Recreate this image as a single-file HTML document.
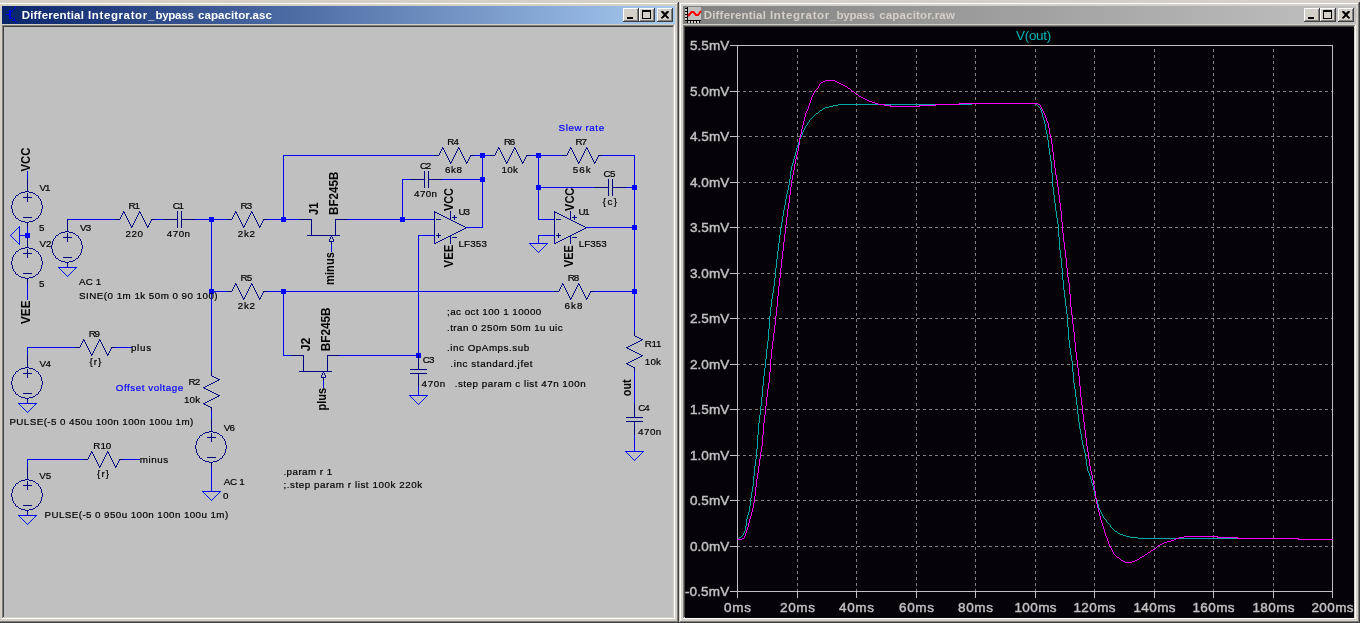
<!DOCTYPE html><html><head><meta charset="utf-8"><style>html,body{margin:0;padding:0;overflow:hidden;background:#d4d0c8}svg{display:block;will-change:transform}text{font-family:"Liberation Sans",sans-serif}</style></head><body>
<svg width="1360" height="623" viewBox="0 0 1360 623">
<defs><linearGradient id="ga" x1="0" x2="1" y1="0" y2="0"><stop offset="0" stop-color="#0a246a"/><stop offset="1" stop-color="#a6caf0"/></linearGradient><linearGradient id="gi" x1="0" x2="1" y1="0" y2="0"><stop offset="0" stop-color="#808080"/><stop offset="1" stop-color="#c0c0c0"/></linearGradient></defs>
<rect x="0" y="0" width="1360" height="623" fill="#d4d0c8"/>
<rect x="-2" y="2" width="681" height="621" fill="#d4d0c8"/>
<rect x="-2" y="2" width="681" height="1" fill="#d4d0c8"/>
<rect x="-1" y="3" width="679" height="1" fill="#ffffff"/>
<rect x="-1" y="3" width="1" height="619" fill="#ffffff"/>
<rect x="678" y="2" width="1" height="621" fill="#404040"/>
<rect x="677" y="3" width="1" height="619" fill="#808080"/>
<rect x="-2" y="622" width="681" height="1" fill="#404040"/>
<rect x="-1" y="621" width="679" height="1" fill="#808080"/>
<rect x="2" y="6" width="673" height="18" fill="url(#ga)"/>
<rect x="2" y="25" width="673" height="1" fill="#808080"/>
<rect x="2" y="25" width="1" height="594" fill="#808080"/>
<rect x="3" y="26" width="671" height="1" fill="#404040"/>
<rect x="3" y="26" width="1" height="592" fill="#404040"/>
<rect x="674" y="25" width="1" height="594" fill="#ffffff"/>
<rect x="2" y="618" width="673" height="1" fill="#ffffff"/>
<rect x="673" y="26" width="1" height="592" fill="#d4d0c8"/>
<rect x="3" y="617" width="671" height="1" fill="#d4d0c8"/>
<rect x="657" y="8" width="16" height="14" fill="#404040"/>
<rect x="657" y="8" width="15" height="13" fill="#ffffff"/>
<rect x="658" y="9" width="14" height="12" fill="#808080"/>
<rect x="658" y="9" width="13" height="11" fill="#d4d0c8"/>
<rect x="661" y="11" width="1" height="1" fill="#000000"/>
<rect x="662" y="11" width="1" height="1" fill="#000000"/>
<rect x="667" y="11" width="1" height="1" fill="#000000"/>
<rect x="668" y="11" width="1" height="1" fill="#000000"/>
<rect x="662" y="12" width="1" height="1" fill="#000000"/>
<rect x="663" y="12" width="1" height="1" fill="#000000"/>
<rect x="666" y="12" width="1" height="1" fill="#000000"/>
<rect x="667" y="12" width="1" height="1" fill="#000000"/>
<rect x="663" y="13" width="1" height="1" fill="#000000"/>
<rect x="664" y="13" width="1" height="1" fill="#000000"/>
<rect x="665" y="13" width="1" height="1" fill="#000000"/>
<rect x="666" y="13" width="1" height="1" fill="#000000"/>
<rect x="664" y="14" width="1" height="1" fill="#000000"/>
<rect x="665" y="14" width="1" height="1" fill="#000000"/>
<rect x="663" y="15" width="1" height="1" fill="#000000"/>
<rect x="664" y="15" width="1" height="1" fill="#000000"/>
<rect x="665" y="15" width="1" height="1" fill="#000000"/>
<rect x="666" y="15" width="1" height="1" fill="#000000"/>
<rect x="662" y="16" width="1" height="1" fill="#000000"/>
<rect x="663" y="16" width="1" height="1" fill="#000000"/>
<rect x="666" y="16" width="1" height="1" fill="#000000"/>
<rect x="667" y="16" width="1" height="1" fill="#000000"/>
<rect x="661" y="17" width="1" height="1" fill="#000000"/>
<rect x="662" y="17" width="1" height="1" fill="#000000"/>
<rect x="667" y="17" width="1" height="1" fill="#000000"/>
<rect x="668" y="17" width="1" height="1" fill="#000000"/>
<rect x="657" y="8" width="16" height="14" fill="#404040"/>
<rect x="657" y="8" width="15" height="13" fill="#ffffff"/>
<rect x="658" y="9" width="14" height="12" fill="#808080"/>
<rect x="658" y="9" width="13" height="11" fill="#d4d0c8"/>
<path d="M661,11 l2,0 l2,2 l2,-2 l2,0 l-3,3.5 l3,3.5 l-2,0 l-2,-2 l-2,2 l-2,0 l3,-3.5 z" fill="#000"/>
<path d="M661.5,11.5 L668.5,18.5 M668.5,11.5 L661.5,18.5" stroke="#000" stroke-width="1.6"/>
<rect x="639" y="8" width="16" height="14" fill="#404040"/>
<rect x="639" y="8" width="15" height="13" fill="#ffffff"/>
<rect x="640" y="9" width="14" height="12" fill="#808080"/>
<rect x="640" y="9" width="13" height="11" fill="#d4d0c8"/>
<rect x="639" y="8" width="16" height="14" fill="#404040"/>
<rect x="639" y="8" width="15" height="13" fill="#ffffff"/>
<rect x="640" y="9" width="14" height="12" fill="#808080"/>
<rect x="640" y="9" width="13" height="11" fill="#d4d0c8"/>
<rect x="642" y="10" width="9" height="9" fill="#000000"/>
<rect x="643" y="12" width="7" height="6" fill="#d4d0c8"/>
<rect x="623" y="8" width="16" height="14" fill="#404040"/>
<rect x="623" y="8" width="15" height="13" fill="#ffffff"/>
<rect x="624" y="9" width="14" height="12" fill="#808080"/>
<rect x="624" y="9" width="13" height="11" fill="#d4d0c8"/>
<rect x="623" y="8" width="16" height="14" fill="#404040"/>
<rect x="623" y="8" width="15" height="13" fill="#ffffff"/>
<rect x="624" y="9" width="14" height="12" fill="#808080"/>
<rect x="624" y="9" width="13" height="11" fill="#d4d0c8"/>
<rect x="627" y="17" width="6" height="2" fill="#000000"/>
<rect x="679" y="2" width="681" height="621" fill="#d4d0c8"/>
<rect x="679" y="2" width="681" height="1" fill="#d4d0c8"/>
<rect x="680" y="3" width="679" height="1" fill="#ffffff"/>
<rect x="680" y="3" width="1" height="619" fill="#ffffff"/>
<rect x="1359" y="2" width="1" height="621" fill="#404040"/>
<rect x="1358" y="3" width="1" height="619" fill="#808080"/>
<rect x="679" y="622" width="681" height="1" fill="#404040"/>
<rect x="680" y="621" width="679" height="1" fill="#808080"/>
<rect x="683" y="6" width="673" height="18" fill="url(#gi)"/>
<rect x="683" y="25" width="673" height="1" fill="#808080"/>
<rect x="683" y="25" width="1" height="594" fill="#808080"/>
<rect x="684" y="26" width="671" height="1" fill="#404040"/>
<rect x="684" y="26" width="1" height="592" fill="#404040"/>
<rect x="1355" y="25" width="1" height="594" fill="#ffffff"/>
<rect x="683" y="618" width="673" height="1" fill="#ffffff"/>
<rect x="1354" y="26" width="1" height="592" fill="#d4d0c8"/>
<rect x="684" y="617" width="671" height="1" fill="#d4d0c8"/>
<rect x="1338" y="8" width="16" height="14" fill="#404040"/>
<rect x="1338" y="8" width="15" height="13" fill="#ffffff"/>
<rect x="1339" y="9" width="14" height="12" fill="#808080"/>
<rect x="1339" y="9" width="13" height="11" fill="#d4d0c8"/>
<rect x="1342" y="11" width="1" height="1" fill="#000000"/>
<rect x="1343" y="11" width="1" height="1" fill="#000000"/>
<rect x="1348" y="11" width="1" height="1" fill="#000000"/>
<rect x="1349" y="11" width="1" height="1" fill="#000000"/>
<rect x="1343" y="12" width="1" height="1" fill="#000000"/>
<rect x="1344" y="12" width="1" height="1" fill="#000000"/>
<rect x="1347" y="12" width="1" height="1" fill="#000000"/>
<rect x="1348" y="12" width="1" height="1" fill="#000000"/>
<rect x="1344" y="13" width="1" height="1" fill="#000000"/>
<rect x="1345" y="13" width="1" height="1" fill="#000000"/>
<rect x="1346" y="13" width="1" height="1" fill="#000000"/>
<rect x="1347" y="13" width="1" height="1" fill="#000000"/>
<rect x="1345" y="14" width="1" height="1" fill="#000000"/>
<rect x="1346" y="14" width="1" height="1" fill="#000000"/>
<rect x="1344" y="15" width="1" height="1" fill="#000000"/>
<rect x="1345" y="15" width="1" height="1" fill="#000000"/>
<rect x="1346" y="15" width="1" height="1" fill="#000000"/>
<rect x="1347" y="15" width="1" height="1" fill="#000000"/>
<rect x="1343" y="16" width="1" height="1" fill="#000000"/>
<rect x="1344" y="16" width="1" height="1" fill="#000000"/>
<rect x="1347" y="16" width="1" height="1" fill="#000000"/>
<rect x="1348" y="16" width="1" height="1" fill="#000000"/>
<rect x="1342" y="17" width="1" height="1" fill="#000000"/>
<rect x="1343" y="17" width="1" height="1" fill="#000000"/>
<rect x="1348" y="17" width="1" height="1" fill="#000000"/>
<rect x="1349" y="17" width="1" height="1" fill="#000000"/>
<rect x="1338" y="8" width="16" height="14" fill="#404040"/>
<rect x="1338" y="8" width="15" height="13" fill="#ffffff"/>
<rect x="1339" y="9" width="14" height="12" fill="#808080"/>
<rect x="1339" y="9" width="13" height="11" fill="#d4d0c8"/>
<path d="M1342,11 l2,0 l2,2 l2,-2 l2,0 l-3,3.5 l3,3.5 l-2,0 l-2,-2 l-2,2 l-2,0 l3,-3.5 z" fill="#000"/>
<path d="M1342.5,11.5 L1349.5,18.5 M1349.5,11.5 L1342.5,18.5" stroke="#000" stroke-width="1.6"/>
<rect x="1320" y="8" width="16" height="14" fill="#404040"/>
<rect x="1320" y="8" width="15" height="13" fill="#ffffff"/>
<rect x="1321" y="9" width="14" height="12" fill="#808080"/>
<rect x="1321" y="9" width="13" height="11" fill="#d4d0c8"/>
<rect x="1320" y="8" width="16" height="14" fill="#404040"/>
<rect x="1320" y="8" width="15" height="13" fill="#ffffff"/>
<rect x="1321" y="9" width="14" height="12" fill="#808080"/>
<rect x="1321" y="9" width="13" height="11" fill="#d4d0c8"/>
<rect x="1323" y="10" width="9" height="9" fill="#000000"/>
<rect x="1324" y="12" width="7" height="6" fill="#d4d0c8"/>
<rect x="1304" y="8" width="16" height="14" fill="#404040"/>
<rect x="1304" y="8" width="15" height="13" fill="#ffffff"/>
<rect x="1305" y="9" width="14" height="12" fill="#808080"/>
<rect x="1305" y="9" width="13" height="11" fill="#d4d0c8"/>
<rect x="1304" y="8" width="16" height="14" fill="#404040"/>
<rect x="1304" y="8" width="15" height="13" fill="#ffffff"/>
<rect x="1305" y="9" width="14" height="12" fill="#808080"/>
<rect x="1305" y="9" width="13" height="11" fill="#d4d0c8"/>
<rect x="1308" y="17" width="6" height="2" fill="#000000"/>
<text x="21.7" y="19" font-size="11.5" font-weight="bold" fill="#ffffff" textLength="62.2" lengthAdjust="spacing">Differential</text>
<text x="88" y="19" font-size="11.5" font-weight="bold" fill="#ffffff" textLength="59.2" lengthAdjust="spacing">Integrator</text>
<text x="148.1" y="19" font-size="11.5" font-weight="bold" fill="#ffffff" textLength="6.6" lengthAdjust="spacing">_</text>
<text x="155.4" y="19" font-size="11.5" font-weight="bold" fill="#ffffff" textLength="38.4" lengthAdjust="spacing">bypass</text>
<text x="197.9" y="19" font-size="11.5" font-weight="bold" fill="#ffffff" textLength="74.1" lengthAdjust="spacing">capacitor.asc</text>
<text x="703.7" y="19" font-size="11.5" font-weight="bold" fill="#d4d0c8" textLength="62.2" lengthAdjust="spacing">Differential</text>
<text x="770" y="19" font-size="11.5" font-weight="bold" fill="#d4d0c8" textLength="59.2" lengthAdjust="spacing">Integrator</text>
<text x="830.1" y="19" font-size="11.5" font-weight="bold" fill="#d4d0c8" textLength="6.6" lengthAdjust="spacing">_</text>
<text x="836.5" y="19" font-size="11.5" font-weight="bold" fill="#d4d0c8" textLength="38.4" lengthAdjust="spacing">bypass</text>
<text x="879.2" y="19" font-size="11.5" font-weight="bold" fill="#d4d0c8" textLength="75.7" lengthAdjust="spacing">capacitor.raw</text>
<g fill="#0000ff" shape-rendering="crispEdges"><rect x="6" y="14" width="3" height="1"/><rect x="9" y="10" width="2" height="9"/><rect x="11" y="11" width="1" height="1"/><rect x="12" y="10" width="1" height="1"/><rect x="13" y="9" width="1" height="1"/><rect x="14" y="8" width="1" height="1"/><rect x="15" y="7" width="1" height="1"/><rect x="11" y="17" width="1" height="1"/><rect x="12" y="18" width="1" height="1"/><rect x="13" y="19" width="1" height="1"/><rect x="14" y="20" width="1" height="1"/><rect x="15" y="21" width="1" height="1"/><rect x="16" y="22" width="1" height="1"/><rect x="12" y="20" width="1" height="1"/><rect x="13" y="20" width="1" height="1"/><rect x="14" y="18" width="1" height="1"/><rect x="14" y="19" width="1" height="1"/></g>
<g shape-rendering="crispEdges">
<rect x="688" y="7" width="13" height="13" fill="#c0c0c0"/>
<rect x="685" y="9" width="2" height="2" fill="#d4d0c8"/>
<rect x="685" y="12" width="2" height="2" fill="#d4d0c8"/>
<rect x="685" y="15" width="2" height="2" fill="#d4d0c8"/>
<rect x="685" y="18" width="2" height="2" fill="#d4d0c8"/>
<rect x="688" y="21" width="2" height="2" fill="#d4d0c8"/>
<rect x="691" y="21" width="2" height="2" fill="#d4d0c8"/>
<rect x="694" y="21" width="2" height="2" fill="#d4d0c8"/>
<rect x="697" y="21" width="2" height="2" fill="#d4d0c8"/>
<rect x="687" y="7" width="1" height="16" fill="#000000"/>
<rect x="685" y="8" width="2" height="1" fill="#000000"/>
<rect x="685" y="11" width="2" height="1" fill="#000000"/>
<rect x="685" y="14" width="2" height="1" fill="#000000"/>
<rect x="685" y="17" width="2" height="1" fill="#000000"/>
<rect x="685" y="20" width="2" height="1" fill="#000000"/>
<rect x="685" y="20" width="16" height="1" fill="#000000"/>
<rect x="687" y="21" width="1" height="2" fill="#000000"/>
<rect x="690" y="21" width="1" height="2" fill="#000000"/>
<rect x="693" y="21" width="1" height="2" fill="#000000"/>
<rect x="696" y="21" width="1" height="2" fill="#000000"/>
<rect x="699" y="21" width="1" height="2" fill="#000000"/>
</g>
<polyline points="688,16 691.5,12 693.5,12 696,15 698,15 701,11" fill="none" stroke="#ff0000" stroke-width="2"/>
<rect x="4" y="27" width="669" height="590" fill="#c0c0c0"/>
<g shape-rendering="crispEdges">
<path fill="#0000ff" d="M480 153h5v1h-5zM536 153h5v1h-5zM480 154h5v1h-5zM536 154h5v1h-5zM283 155h151v1h-151zM474 155h16v1h-16zM530 155h32v1h-32zM602 155h33v1h-33zM283 156h1v61h-1zM480 156h5v1h-5zM536 156h5v1h-5zM634 156h1v29h-1zM480 157h5v1h-5zM536 157h5v1h-5zM482 158h1v19h-1zM538 158h1v27h-1zM27 171h1v8h-1zM480 177h5v1h-5zM480 178h5v1h-5zM402 179h8v1h-8zM442 179h43v1h-43zM402 180h1v37h-1zM480 180h5v1h-5zM480 181h5v1h-5zM482 182h1v45h-1zM536 185h5v1h-5zM632 185h5v1h-5zM536 186h5v1h-5zM632 186h5v1h-5zM536 187h58v1h-58zM626 187h11v1h-11zM536 188h5v1h-5zM632 188h5v1h-5zM536 189h5v1h-5zM632 189h5v1h-5zM538 190h1v29h-1zM634 190h1v35h-1zM209 217h5v1h-5zM281 217h5v1h-5zM400 217h5v1h-5zM209 218h5v1h-5zM281 218h5v1h-5zM400 218h5v1h-5zM68 219h47v1h-47zM155 219h8v1h-8zM195 219h32v1h-32zM267 219h32v1h-32zM347 219h87v1h-87zM538 219h16v1h-16zM209 220h5v1h-5zM281 220h5v1h-5zM400 220h5v1h-5zM209 221h5v1h-5zM281 221h5v1h-5zM400 221h5v1h-5zM211 222h1v67h-1zM632 225h5v1h-5zM19 226h1v1h-1zM632 226h5v1h-5zM18 227h2v1h-2zM27 227h1v6h-1zM466 227h17v1h-17zM586 227h51v1h-51zM17 228h1v1h-1zM19 228h1v7h-1zM632 228h5v1h-5zM16 229h1v1h-1zM632 229h5v1h-5zM15 230h1v1h-1zM634 230h1v59h-1zM14 231h1v1h-1zM13 232h1v1h-1zM12 233h1v1h-1zM25 233h5v1h-5zM11 234h1v1h-1zM25 234h5v1h-5zM10 235h1v1h-1zM19 235h11v1h-11zM418 235h17v1h-17zM538 235h17v1h-17zM11 236h1v1h-1zM19 236h1v7h-1zM25 236h5v1h-5zM418 236h1v55h-1zM538 236h1v7h-1zM12 237h1v1h-1zM25 237h5v1h-5zM13 238h1v1h-1zM14 239h1v1h-1zM15 240h1v1h-1zM16 241h1v1h-1zM17 242h1v1h-1zM18 243h2v1h-2zM529 243h19v1h-19zM19 244h1v1h-1zM530 244h1v1h-1zM546 244h1v1h-1zM331 245h1v7h-1zM531 245h1v1h-1zM545 245h1v1h-1zM532 246h1v1h-1zM544 246h1v1h-1zM533 247h1v1h-1zM543 247h1v1h-1zM534 248h1v1h-1zM542 248h1v1h-1zM535 249h1v1h-1zM541 249h1v1h-1zM536 250h1v1h-1zM540 250h1v1h-1zM537 251h1v1h-1zM539 251h1v1h-1zM538 252h1v1h-1zM58 267h19v1h-19zM59 268h1v1h-1zM75 268h1v1h-1zM60 269h1v1h-1zM74 269h1v1h-1zM61 270h1v1h-1zM73 270h1v1h-1zM62 271h1v1h-1zM72 271h1v1h-1zM63 272h1v1h-1zM71 272h1v1h-1zM64 273h1v1h-1zM70 273h1v1h-1zM65 274h1v1h-1zM69 274h1v1h-1zM66 275h1v1h-1zM68 275h1v1h-1zM67 276h1v1h-1zM27 283h1v17h-1zM209 289h5v1h-5zM281 289h5v1h-5zM632 289h5v1h-5zM209 290h5v1h-5zM281 290h5v1h-5zM632 290h5v1h-5zM209 291h18v1h-18zM267 291h287v1h-287zM594 291h43v1h-43zM209 292h5v1h-5zM281 292h5v1h-5zM418 292h1v61h-1zM632 292h5v1h-5zM209 293h5v1h-5zM281 293h5v1h-5zM632 293h5v1h-5zM211 294h1v77h-1zM283 294h1v61h-1zM634 294h1v37h-1zM27 347h48v1h-48zM115 347h17v1h-17zM27 348h1v7h-1zM416 353h5v1h-5zM416 354h5v1h-5zM283 355h8v1h-8zM339 355h79v1h-79zM419 355h2v1h-2zM416 356h2v1h-2zM419 356h2v1h-2zM416 357h2v1h-2zM419 357h2v1h-2zM634 371h1v32h-1zM323 381h1v7h-1zM418 387h1v8h-1zM409 395h19v1h-19zM410 396h1v1h-1zM426 396h1v1h-1zM411 397h1v1h-1zM425 397h1v1h-1zM412 398h1v1h-1zM424 398h1v1h-1zM413 399h1v1h-1zM423 399h1v1h-1zM414 400h1v1h-1zM422 400h1v1h-1zM415 401h1v1h-1zM421 401h1v1h-1zM416 402h1v1h-1zM420 402h1v1h-1zM18 403h19v1h-19zM417 403h1v1h-1zM419 403h1v1h-1zM19 404h1v1h-1zM35 404h1v1h-1zM418 404h1v1h-1zM20 405h1v1h-1zM34 405h1v1h-1zM21 406h1v1h-1zM33 406h1v1h-1zM22 407h1v1h-1zM32 407h1v1h-1zM23 408h1v1h-1zM31 408h1v1h-1zM24 409h1v1h-1zM30 409h1v1h-1zM25 410h1v1h-1zM29 410h1v1h-1zM26 411h1v1h-1zM28 411h1v1h-1zM211 411h1v8h-1zM27 412h1v1h-1zM634 435h1v16h-1zM625 451h19v1h-19zM626 452h1v1h-1zM642 452h1v1h-1zM627 453h1v1h-1zM641 453h1v1h-1zM628 454h1v1h-1zM640 454h1v1h-1zM629 455h1v1h-1zM639 455h1v1h-1zM630 456h1v1h-1zM638 456h1v1h-1zM631 457h1v1h-1zM637 457h1v1h-1zM632 458h1v1h-1zM636 458h1v1h-1zM27 459h56v1h-56zM123 459h17v1h-17zM633 459h1v1h-1zM635 459h1v1h-1zM27 460h1v7h-1zM634 460h1v1h-1zM211 467h1v24h-1zM202 491h19v1h-19zM203 492h1v1h-1zM219 492h1v1h-1zM204 493h1v1h-1zM218 493h1v1h-1zM205 494h1v1h-1zM217 494h1v1h-1zM206 495h1v1h-1zM216 495h1v1h-1zM207 496h1v1h-1zM215 496h1v1h-1zM208 497h1v1h-1zM214 497h1v1h-1zM209 498h1v1h-1zM213 498h1v1h-1zM210 499h1v1h-1zM212 499h1v1h-1zM211 500h1v1h-1zM18 515h19v1h-19zM19 516h1v1h-1zM35 516h1v1h-1zM20 517h1v1h-1zM34 517h1v1h-1zM21 518h1v1h-1zM33 518h1v1h-1zM22 519h1v1h-1zM32 519h1v1h-1zM23 520h1v1h-1zM31 520h1v1h-1zM24 521h1v1h-1zM30 521h1v1h-1zM25 522h1v1h-1zM29 522h1v1h-1zM26 523h1v1h-1zM28 523h1v1h-1zM27 524h1v1h-1z"/>
<path fill="#000080" d="M442 147h1v1h-1zM458 147h1v1h-1zM498 147h1v1h-1zM514 147h1v1h-1zM570 147h1v1h-1zM586 147h1v1h-1zM442 148h2v1h-2zM458 148h2v1h-2zM498 148h2v1h-2zM514 148h2v1h-2zM570 148h2v1h-2zM586 148h2v1h-2zM441 149h1v2h-1zM443 149h1v1h-1zM457 149h1v2h-1zM459 149h1v1h-1zM497 149h1v2h-1zM499 149h1v1h-1zM513 149h1v2h-1zM515 149h1v1h-1zM569 149h1v2h-1zM571 149h1v1h-1zM585 149h1v2h-1zM587 149h1v1h-1zM444 150h1v2h-1zM460 150h1v2h-1zM500 150h1v2h-1zM516 150h1v2h-1zM572 150h1v2h-1zM588 150h1v2h-1zM440 151h1v2h-1zM456 151h1v2h-1zM496 151h1v2h-1zM512 151h1v2h-1zM568 151h1v2h-1zM584 151h1v2h-1zM445 152h1v2h-1zM461 152h1v2h-1zM501 152h1v2h-1zM517 152h1v2h-1zM573 152h1v2h-1zM589 152h1v2h-1zM439 153h1v2h-1zM455 153h1v2h-1zM495 153h1v2h-1zM511 153h1v2h-1zM567 153h1v2h-1zM583 153h1v2h-1zM446 154h1v2h-1zM462 154h1v2h-1zM502 154h1v2h-1zM518 154h1v2h-1zM574 154h1v2h-1zM590 154h1v2h-1zM434 155h5v1h-5zM454 155h1v2h-1zM470 155h4v1h-4zM490 155h5v1h-5zM510 155h1v2h-1zM526 155h4v1h-4zM562 155h5v1h-5zM582 155h1v2h-1zM598 155h4v1h-4zM447 156h1v2h-1zM463 156h1v2h-1zM470 156h1v1h-1zM503 156h1v2h-1zM519 156h1v2h-1zM526 156h1v1h-1zM575 156h1v2h-1zM591 156h1v2h-1zM598 156h1v1h-1zM453 157h1v2h-1zM469 157h1v2h-1zM509 157h1v2h-1zM525 157h1v2h-1zM581 157h1v2h-1zM597 157h1v2h-1zM448 158h1v2h-1zM464 158h1v2h-1zM504 158h1v2h-1zM520 158h1v2h-1zM576 158h1v2h-1zM592 158h1v2h-1zM452 159h1v2h-1zM468 159h1v2h-1zM508 159h1v2h-1zM524 159h1v2h-1zM580 159h1v2h-1zM596 159h1v2h-1zM449 160h1v2h-1zM465 160h1v2h-1zM505 160h1v2h-1zM521 160h1v2h-1zM577 160h1v2h-1zM593 160h1v2h-1zM451 161h1v1h-1zM467 161h1v1h-1zM507 161h1v1h-1zM523 161h1v1h-1zM579 161h1v1h-1zM595 161h1v1h-1zM450 162h2v1h-2zM466 162h2v1h-2zM506 162h2v1h-2zM522 162h2v1h-2zM578 162h2v1h-2zM594 162h2v1h-2zM450 163h1v1h-1zM466 163h1v1h-1zM506 163h1v1h-1zM522 163h1v1h-1zM578 163h1v1h-1zM594 163h1v1h-1zM424 171h1v8h-1zM428 171h1v8h-1zM27 179h1v12h-1zM410 179h15v1h-15zM428 179h14v1h-14zM608 179h1v8h-1zM612 179h1v8h-1zM424 180h1v8h-1zM428 180h1v8h-1zM594 187h15v1h-15zM612 187h14v1h-14zM608 188h1v8h-1zM612 188h1v8h-1zM25 191h4v1h-4zM21 192h4v1h-4zM29 192h4v1h-4zM19 193h2v1h-2zM27 193h1v4h-1zM33 193h2v1h-2zM18 194h1v1h-1zM35 194h1v1h-1zM16 195h2v1h-2zM36 195h2v1h-2zM15 196h1v2h-1zM38 196h1v2h-1zM23 197h9v1h-9zM14 198h1v1h-1zM27 198h1v4h-1zM39 198h1v1h-1zM13 199h1v2h-1zM40 199h1v2h-1zM12 201h1v4h-1zM41 201h1v4h-1zM11 205h1v4h-1zM42 205h1v4h-1zM12 209h1v4h-1zM41 209h1v4h-1zM123 211h1v1h-1zM139 211h1v1h-1zM177 211h1v8h-1zM181 211h1v8h-1zM235 211h1v1h-1zM251 211h1v1h-1zM434 211h1v1h-1zM450 211h1v8h-1zM554 211h1v1h-1zM570 211h1v8h-1zM123 212h2v1h-2zM139 212h2v1h-2zM235 212h2v1h-2zM251 212h2v1h-2zM434 212h3v1h-3zM554 212h3v1h-3zM13 213h1v2h-1zM40 213h1v2h-1zM122 213h1v2h-1zM124 213h1v1h-1zM138 213h1v2h-1zM140 213h1v1h-1zM234 213h1v2h-1zM236 213h1v1h-1zM250 213h1v2h-1zM252 213h1v1h-1zM434 213h1v22h-1zM437 213h2v1h-2zM554 213h1v22h-1zM557 213h2v1h-2zM125 214h1v2h-1zM141 214h1v2h-1zM237 214h1v2h-1zM253 214h1v2h-1zM439 214h2v1h-2zM559 214h2v1h-2zM14 215h1v1h-1zM39 215h1v1h-1zM121 215h1v2h-1zM137 215h1v2h-1zM233 215h1v2h-1zM249 215h1v2h-1zM441 215h2v1h-2zM454 215h1v2h-1zM561 215h2v1h-2zM574 215h1v2h-1zM15 216h1v2h-1zM38 216h1v2h-1zM126 216h1v2h-1zM142 216h1v2h-1zM238 216h1v2h-1zM254 216h1v2h-1zM443 216h2v1h-2zM563 216h2v1h-2zM23 217h9v1h-9zM120 217h1v2h-1zM136 217h1v2h-1zM232 217h1v2h-1zM248 217h1v2h-1zM445 217h2v1h-2zM452 217h5v1h-5zM565 217h2v1h-2zM572 217h5v1h-5zM16 218h2v1h-2zM36 218h2v1h-2zM127 218h1v2h-1zM143 218h1v2h-1zM239 218h1v2h-1zM255 218h1v2h-1zM447 218h2v1h-2zM454 218h1v2h-1zM567 218h2v1h-2zM574 218h1v2h-1zM18 219h1v1h-1zM35 219h1v1h-1zM67 219h1v12h-1zM115 219h5v1h-5zM135 219h1v2h-1zM151 219h4v1h-4zM163 219h15v1h-15zM181 219h14v1h-14zM227 219h5v1h-5zM247 219h1v2h-1zM263 219h4v1h-4zM299 219h13v1h-13zM335 219h12v1h-12zM436 219h5v1h-5zM449 219h2v1h-2zM556 219h5v1h-5zM569 219h2v1h-2zM19 220h2v1h-2zM33 220h2v1h-2zM128 220h1v2h-1zM144 220h1v2h-1zM151 220h1v1h-1zM177 220h1v8h-1zM181 220h1v8h-1zM240 220h1v2h-1zM256 220h1v2h-1zM263 220h1v1h-1zM311 220h1v15h-1zM335 220h1v15h-1zM451 220h2v1h-2zM571 220h2v1h-2zM21 221h4v1h-4zM29 221h4v1h-4zM134 221h1v2h-1zM150 221h1v2h-1zM246 221h1v2h-1zM262 221h1v2h-1zM453 221h2v1h-2zM573 221h2v1h-2zM25 222h4v1h-4zM129 222h1v2h-1zM145 222h1v2h-1zM241 222h1v2h-1zM257 222h1v2h-1zM455 222h2v1h-2zM575 222h2v1h-2zM27 223h1v4h-1zM133 223h1v2h-1zM149 223h1v2h-1zM245 223h1v2h-1zM261 223h1v2h-1zM457 223h2v1h-2zM577 223h2v1h-2zM130 224h1v2h-1zM146 224h1v2h-1zM242 224h1v2h-1zM258 224h1v2h-1zM459 224h2v1h-2zM579 224h2v1h-2zM132 225h1v1h-1zM148 225h1v1h-1zM244 225h1v1h-1zM260 225h1v1h-1zM461 225h2v1h-2zM581 225h2v1h-2zM131 226h2v1h-2zM147 226h2v1h-2zM243 226h2v1h-2zM259 226h2v1h-2zM463 226h2v1h-2zM583 226h2v1h-2zM131 227h1v1h-1zM147 227h1v1h-1zM243 227h1v1h-1zM259 227h1v1h-1zM465 227h1v1h-1zM585 227h1v1h-1zM464 228h2v1h-2zM584 228h2v1h-2zM462 229h2v1h-2zM582 229h2v1h-2zM460 230h2v1h-2zM580 230h2v1h-2zM65 231h4v1h-4zM458 231h2v1h-2zM578 231h2v1h-2zM61 232h4v1h-4zM69 232h4v1h-4zM456 232h2v1h-2zM576 232h2v1h-2zM59 233h2v1h-2zM67 233h1v4h-1zM73 233h2v1h-2zM438 233h1v2h-1zM454 233h2v1h-2zM558 233h1v2h-1zM574 233h2v1h-2zM58 234h1v1h-1zM75 234h1v1h-1zM452 234h2v1h-2zM572 234h2v1h-2zM56 235h2v1h-2zM76 235h2v1h-2zM307 235h33v1h-33zM436 235h5v1h-5zM450 235h2v1h-2zM556 235h5v1h-5zM570 235h2v1h-2zM55 236h1v2h-1zM78 236h1v2h-1zM331 236h1v1h-1zM434 236h1v7h-1zM438 236h1v2h-1zM448 236h3v1h-3zM554 236h1v7h-1zM558 236h1v2h-1zM568 236h3v1h-3zM63 237h9v1h-9zM330 237h1v2h-1zM332 237h1v2h-1zM446 237h2v1h-2zM450 237h1v7h-1zM452 237h5v1h-5zM566 237h2v1h-2zM570 237h1v7h-1zM572 237h5v1h-5zM27 238h1v9h-1zM54 238h1v1h-1zM67 238h1v4h-1zM79 238h1v1h-1zM444 238h2v1h-2zM564 238h2v1h-2zM53 239h1v2h-1zM80 239h1v2h-1zM329 239h1v2h-1zM333 239h1v2h-1zM442 239h2v1h-2zM562 239h2v1h-2zM440 240h2v1h-2zM560 240h2v1h-2zM52 241h1v4h-1zM81 241h1v4h-1zM329 241h5v1h-5zM438 241h2v1h-2zM558 241h2v1h-2zM331 242h1v3h-1zM436 242h2v1h-2zM556 242h2v1h-2zM434 243h2v1h-2zM554 243h2v1h-2zM51 245h1v4h-1zM82 245h1v4h-1zM25 247h4v1h-4zM21 248h4v1h-4zM29 248h4v1h-4zM19 249h2v1h-2zM27 249h1v4h-1zM33 249h2v1h-2zM52 249h1v4h-1zM81 249h1v4h-1zM18 250h1v1h-1zM35 250h1v1h-1zM16 251h2v1h-2zM36 251h2v1h-2zM15 252h1v2h-1zM38 252h1v2h-1zM23 253h9v1h-9zM53 253h1v2h-1zM80 253h1v2h-1zM14 254h1v1h-1zM27 254h1v4h-1zM39 254h1v1h-1zM13 255h1v2h-1zM40 255h1v2h-1zM54 255h1v1h-1zM79 255h1v1h-1zM55 256h1v2h-1zM78 256h1v2h-1zM12 257h1v4h-1zM41 257h1v4h-1zM63 257h9v1h-9zM56 258h2v1h-2zM76 258h2v1h-2zM58 259h1v1h-1zM75 259h1v1h-1zM59 260h2v1h-2zM73 260h2v1h-2zM11 261h1v4h-1zM42 261h1v4h-1zM61 261h4v1h-4zM69 261h4v1h-4zM65 262h4v1h-4zM67 263h1v4h-1zM12 265h1v4h-1zM41 265h1v4h-1zM13 269h1v2h-1zM40 269h1v2h-1zM14 271h1v1h-1zM39 271h1v1h-1zM15 272h1v2h-1zM38 272h1v2h-1zM23 273h9v1h-9zM16 274h2v1h-2zM36 274h2v1h-2zM18 275h1v1h-1zM35 275h1v1h-1zM19 276h2v1h-2zM33 276h2v1h-2zM21 277h4v1h-4zM29 277h4v1h-4zM25 278h4v1h-4zM27 279h1v4h-1zM235 283h1v1h-1zM251 283h1v1h-1zM562 283h1v1h-1zM578 283h1v1h-1zM235 284h2v1h-2zM251 284h2v1h-2zM562 284h2v1h-2zM578 284h2v1h-2zM234 285h1v2h-1zM236 285h1v1h-1zM250 285h1v2h-1zM252 285h1v1h-1zM561 285h1v2h-1zM563 285h1v1h-1zM577 285h1v2h-1zM579 285h1v1h-1zM237 286h1v2h-1zM253 286h1v2h-1zM564 286h1v2h-1zM580 286h1v2h-1zM233 287h1v2h-1zM249 287h1v2h-1zM560 287h1v2h-1zM576 287h1v2h-1zM238 288h1v2h-1zM254 288h1v2h-1zM565 288h1v2h-1zM581 288h1v2h-1zM232 289h1v2h-1zM248 289h1v2h-1zM559 289h1v2h-1zM575 289h1v2h-1zM239 290h1v2h-1zM255 290h1v2h-1zM566 290h1v2h-1zM582 290h1v2h-1zM227 291h5v1h-5zM247 291h1v2h-1zM263 291h4v1h-4zM554 291h5v1h-5zM574 291h1v2h-1zM590 291h4v1h-4zM240 292h1v2h-1zM256 292h1v2h-1zM263 292h1v1h-1zM567 292h1v2h-1zM583 292h1v2h-1zM590 292h1v1h-1zM246 293h1v2h-1zM262 293h1v2h-1zM573 293h1v2h-1zM589 293h1v2h-1zM241 294h1v2h-1zM257 294h1v2h-1zM568 294h1v2h-1zM584 294h1v2h-1zM245 295h1v2h-1zM261 295h1v2h-1zM572 295h1v2h-1zM588 295h1v2h-1zM242 296h1v2h-1zM258 296h1v2h-1zM569 296h1v2h-1zM585 296h1v2h-1zM244 297h1v1h-1zM260 297h1v1h-1zM571 297h1v1h-1zM587 297h1v1h-1zM243 298h2v1h-2zM259 298h2v1h-2zM570 298h2v1h-2zM586 298h2v1h-2zM243 299h1v1h-1zM259 299h1v1h-1zM570 299h1v1h-1zM586 299h1v1h-1zM634 331h1v5h-1zM635 336h2v1h-2zM637 337h2v1h-2zM639 338h2v1h-2zM83 339h1v1h-1zM99 339h1v1h-1zM641 339h2v1h-2zM83 340h2v1h-2zM99 340h2v1h-2zM640 340h2v1h-2zM82 341h1v2h-1zM84 341h1v1h-1zM98 341h1v2h-1zM100 341h1v1h-1zM638 341h2v1h-2zM85 342h1v2h-1zM101 342h1v2h-1zM636 342h2v1h-2zM81 343h1v2h-1zM97 343h1v2h-1zM634 343h2v1h-2zM86 344h1v2h-1zM102 344h1v2h-1zM632 344h2v1h-2zM80 345h1v2h-1zM96 345h1v2h-1zM630 345h2v1h-2zM87 346h1v2h-1zM103 346h1v2h-1zM628 346h2v1h-2zM75 347h5v1h-5zM95 347h1v2h-1zM111 347h4v1h-4zM626 347h2v1h-2zM88 348h1v2h-1zM104 348h1v2h-1zM111 348h1v1h-1zM627 348h2v1h-2zM94 349h1v2h-1zM110 349h1v2h-1zM629 349h2v1h-2zM89 350h1v2h-1zM105 350h1v2h-1zM631 350h2v1h-2zM93 351h1v2h-1zM109 351h1v2h-1zM633 351h2v1h-2zM90 352h1v2h-1zM106 352h1v2h-1zM635 352h2v1h-2zM92 353h1v1h-1zM108 353h1v1h-1zM637 353h2v1h-2zM91 354h2v1h-2zM107 354h2v1h-2zM639 354h2v1h-2zM27 355h1v12h-1zM91 355h1v1h-1zM107 355h1v1h-1zM291 355h13v1h-13zM327 355h12v1h-12zM418 355h1v14h-1zM641 355h2v1h-2zM303 356h1v15h-1zM327 356h1v15h-1zM640 356h2v1h-2zM638 357h2v1h-2zM636 358h2v1h-2zM634 359h2v1h-2zM632 360h2v1h-2zM630 361h2v1h-2zM628 362h2v1h-2zM626 363h2v1h-2zM627 364h2v1h-2zM629 365h2v1h-2zM631 366h2v1h-2zM25 367h4v1h-4zM633 367h2v1h-2zM21 368h4v1h-4zM29 368h4v1h-4zM634 368h1v3h-1zM19 369h2v1h-2zM27 369h1v4h-1zM33 369h2v1h-2zM410 369h17v1h-17zM18 370h1v1h-1zM35 370h1v1h-1zM16 371h2v1h-2zM36 371h2v1h-2zM211 371h1v5h-1zM299 371h33v1h-33zM15 372h1v2h-1zM38 372h1v2h-1zM323 372h1v1h-1zM23 373h9v1h-9zM322 373h1v2h-1zM324 373h1v2h-1zM410 373h17v1h-17zM14 374h1v1h-1zM27 374h1v4h-1zM39 374h1v1h-1zM418 374h1v13h-1zM13 375h1v2h-1zM40 375h1v2h-1zM321 375h1v2h-1zM325 375h1v2h-1zM212 376h2v1h-2zM12 377h1v4h-1zM41 377h1v4h-1zM214 377h2v1h-2zM321 377h5v1h-5zM216 378h2v1h-2zM323 378h1v3h-1zM218 379h2v1h-2zM217 380h2v1h-2zM11 381h1v4h-1zM42 381h1v4h-1zM215 381h2v1h-2zM213 382h2v1h-2zM211 383h2v1h-2zM209 384h2v1h-2zM12 385h1v4h-1zM41 385h1v4h-1zM207 385h2v1h-2zM205 386h2v1h-2zM203 387h2v1h-2zM204 388h2v1h-2zM13 389h1v2h-1zM40 389h1v2h-1zM206 389h2v1h-2zM208 390h2v1h-2zM14 391h1v1h-1zM39 391h1v1h-1zM210 391h2v1h-2zM15 392h1v2h-1zM38 392h1v2h-1zM212 392h2v1h-2zM23 393h9v1h-9zM214 393h2v1h-2zM16 394h2v1h-2zM36 394h2v1h-2zM216 394h2v1h-2zM18 395h1v1h-1zM35 395h1v1h-1zM218 395h2v1h-2zM19 396h2v1h-2zM33 396h2v1h-2zM217 396h2v1h-2zM21 397h4v1h-4zM29 397h4v1h-4zM215 397h2v1h-2zM25 398h4v1h-4zM213 398h2v1h-2zM27 399h1v4h-1zM211 399h2v1h-2zM209 400h2v1h-2zM207 401h2v1h-2zM205 402h2v1h-2zM203 403h2v1h-2zM634 403h1v14h-1zM204 404h2v1h-2zM206 405h2v1h-2zM208 406h2v1h-2zM210 407h2v1h-2zM211 408h1v3h-1zM626 417h17v1h-17zM211 419h1v12h-1zM626 421h17v1h-17zM634 422h1v13h-1zM209 431h4v1h-4zM205 432h4v1h-4zM213 432h4v1h-4zM203 433h2v1h-2zM211 433h1v4h-1zM217 433h2v1h-2zM202 434h1v1h-1zM219 434h1v1h-1zM200 435h2v1h-2zM220 435h2v1h-2zM199 436h1v2h-1zM222 436h1v2h-1zM207 437h9v1h-9zM198 438h1v1h-1zM211 438h1v4h-1zM223 438h1v1h-1zM197 439h1v2h-1zM224 439h1v2h-1zM196 441h1v4h-1zM225 441h1v4h-1zM195 445h1v4h-1zM226 445h1v4h-1zM196 449h1v4h-1zM225 449h1v4h-1zM91 451h1v1h-1zM107 451h1v1h-1zM91 452h2v1h-2zM107 452h2v1h-2zM90 453h1v2h-1zM92 453h1v1h-1zM106 453h1v2h-1zM108 453h1v1h-1zM197 453h1v2h-1zM224 453h1v2h-1zM93 454h1v2h-1zM109 454h1v2h-1zM89 455h1v2h-1zM105 455h1v2h-1zM198 455h1v1h-1zM223 455h1v1h-1zM94 456h1v2h-1zM110 456h1v2h-1zM199 456h1v2h-1zM222 456h1v2h-1zM88 457h1v2h-1zM104 457h1v2h-1zM207 457h9v1h-9zM95 458h1v2h-1zM111 458h1v2h-1zM200 458h2v1h-2zM220 458h2v1h-2zM83 459h5v1h-5zM103 459h1v2h-1zM119 459h4v1h-4zM202 459h1v1h-1zM219 459h1v1h-1zM96 460h1v2h-1zM112 460h1v2h-1zM119 460h1v1h-1zM203 460h2v1h-2zM217 460h2v1h-2zM102 461h1v2h-1zM118 461h1v2h-1zM205 461h4v1h-4zM213 461h4v1h-4zM97 462h1v2h-1zM113 462h1v2h-1zM209 462h4v1h-4zM101 463h1v2h-1zM117 463h1v2h-1zM211 463h1v4h-1zM98 464h1v2h-1zM114 464h1v2h-1zM100 465h1v1h-1zM116 465h1v1h-1zM99 466h2v1h-2zM115 466h2v1h-2zM27 467h1v12h-1zM99 467h1v1h-1zM115 467h1v1h-1zM25 479h4v1h-4zM21 480h4v1h-4zM29 480h4v1h-4zM19 481h2v1h-2zM27 481h1v4h-1zM33 481h2v1h-2zM18 482h1v1h-1zM35 482h1v1h-1zM16 483h2v1h-2zM36 483h2v1h-2zM15 484h1v2h-1zM38 484h1v2h-1zM23 485h9v1h-9zM14 486h1v1h-1zM27 486h1v4h-1zM39 486h1v1h-1zM13 487h1v2h-1zM40 487h1v2h-1zM12 489h1v4h-1zM41 489h1v4h-1zM11 493h1v4h-1zM42 493h1v4h-1zM12 497h1v4h-1zM41 497h1v4h-1zM13 501h1v2h-1zM40 501h1v2h-1zM14 503h1v1h-1zM39 503h1v1h-1zM15 504h1v2h-1zM38 504h1v2h-1zM23 505h9v1h-9zM16 506h2v1h-2zM36 506h2v1h-2zM18 507h1v1h-1zM35 507h1v1h-1zM19 508h2v1h-2zM33 508h2v1h-2zM21 509h4v1h-4zM29 509h4v1h-4zM25 510h4v1h-4zM27 511h1v4h-1z"/>
</g>
<text x="39.4" y="191" font-size="9.8" fill="#000000" stroke="#000000" stroke-width="0.2" font-weight="normal" text-anchor="start" textLength="11" lengthAdjust="spacing" >V1</text>
<text x="38.9" y="231" font-size="9.8" fill="#000000" stroke="#000000" stroke-width="0.2" font-weight="normal" text-anchor="start" >5</text>
<text x="39.5" y="247" font-size="9.8" fill="#000000" stroke="#000000" stroke-width="0.2" font-weight="normal" text-anchor="start" textLength="12" lengthAdjust="spacing" >V2</text>
<text x="39" y="287" font-size="9.8" fill="#000000" stroke="#000000" stroke-width="0.2" font-weight="normal" text-anchor="start" >5</text>
<text x="79.9" y="231" font-size="9.8" fill="#000000" stroke="#000000" stroke-width="0.2" font-weight="normal" text-anchor="start" textLength="11.2" lengthAdjust="spacing" >V3</text>
<text x="79.1" y="285" font-size="9.8" fill="#000000" stroke="#000000" stroke-width="0.2" font-weight="normal" text-anchor="start" textLength="22" lengthAdjust="spacing" >AC 1</text>
<text x="79.1" y="299" font-size="9.8" fill="#000000" stroke="#000000" stroke-width="0.2" font-weight="normal" text-anchor="start" textLength="138.5" lengthAdjust="spacing" >SINE(0 1m 1k 50m 0 90 100)</text>
<text x="128.5" y="209" font-size="9.8" fill="#000000" stroke="#000000" stroke-width="0.2" font-weight="normal" text-anchor="start" textLength="11.4" lengthAdjust="spacing" >R1</text>
<text x="125.4" y="237" font-size="9.8" fill="#000000" stroke="#000000" stroke-width="0.2" font-weight="normal" text-anchor="start" textLength="17.6" lengthAdjust="spacing" >220</text>
<text x="172.7" y="209" font-size="9.8" fill="#000000" stroke="#000000" stroke-width="0.2" font-weight="normal" text-anchor="start" textLength="11.2" lengthAdjust="spacing" >C1</text>
<text x="166.8" y="237" font-size="9.8" fill="#000000" stroke="#000000" stroke-width="0.2" font-weight="normal" text-anchor="start" textLength="23.2" lengthAdjust="spacing" >470n</text>
<text x="240.5" y="209" font-size="9.8" fill="#000000" stroke="#000000" stroke-width="0.2" font-weight="normal" text-anchor="start" textLength="11.7" lengthAdjust="spacing" >R3</text>
<text x="237.8" y="237" font-size="9.8" fill="#000000" stroke="#000000" stroke-width="0.2" font-weight="normal" text-anchor="start" textLength="17.2" lengthAdjust="spacing" >2k2</text>
<text x="240.5" y="281" font-size="9.8" fill="#000000" stroke="#000000" stroke-width="0.2" font-weight="normal" text-anchor="start" textLength="11.7" lengthAdjust="spacing" >R5</text>
<text x="237.8" y="308.7" font-size="9.8" fill="#000000" stroke="#000000" stroke-width="0.2" font-weight="normal" text-anchor="start" textLength="17.2" lengthAdjust="spacing" >2k2</text>
<text x="419.9" y="169" font-size="9.8" fill="#000000" stroke="#000000" stroke-width="0.2" font-weight="normal" text-anchor="start" textLength="11.2" lengthAdjust="spacing" >C2</text>
<text x="414.1" y="197" font-size="9.8" fill="#000000" stroke="#000000" stroke-width="0.2" font-weight="normal" text-anchor="start" textLength="22.8" lengthAdjust="spacing" >470n</text>
<text x="447.2" y="145" font-size="9.8" fill="#000000" stroke="#000000" stroke-width="0.2" font-weight="normal" text-anchor="start" textLength="11.7" lengthAdjust="spacing" >R4</text>
<text x="444.9" y="173" font-size="9.8" fill="#000000" stroke="#000000" stroke-width="0.2" font-weight="normal" text-anchor="start" textLength="17.1" lengthAdjust="spacing" >6k8</text>
<text x="503.9" y="145" font-size="9.8" fill="#000000" stroke="#000000" stroke-width="0.2" font-weight="normal" text-anchor="start" textLength="11.2" lengthAdjust="spacing" >R6</text>
<text x="501.6" y="173" font-size="9.8" fill="#000000" stroke="#000000" stroke-width="0.2" font-weight="normal" text-anchor="start" textLength="16.4" lengthAdjust="spacing" >10k</text>
<text x="575.4" y="145" font-size="9.8" fill="#000000" stroke="#000000" stroke-width="0.2" font-weight="normal" text-anchor="start" textLength="11.6" lengthAdjust="spacing" >R7</text>
<text x="572.7" y="173" font-size="9.8" fill="#000000" stroke="#000000" stroke-width="0.2" font-weight="normal" text-anchor="start" textLength="17.9" lengthAdjust="spacing" >56k</text>
<text x="558.5" y="131.2" font-size="9.8" fill="#0000ff" stroke="#0000ff" stroke-width="0.2" font-weight="normal" text-anchor="start" textLength="45.6" lengthAdjust="spacing" >Slew rate</text>
<text x="603.5" y="177.2" font-size="9.8" fill="#000000" stroke="#000000" stroke-width="0.2" font-weight="normal" text-anchor="start" textLength="11.9" lengthAdjust="spacing" >C5</text>
<text x="602.8" y="204.5" font-size="9.8" fill="#000000" stroke="#000000" stroke-width="0.2" font-weight="normal" text-anchor="start" textLength="14.2" lengthAdjust="spacing" >{c}</text>
<text x="458.4" y="215" font-size="9.8" fill="#000000" stroke="#000000" stroke-width="0.2" font-weight="normal" text-anchor="start" textLength="11.6" lengthAdjust="spacing" >U3</text>
<text x="458.4" y="247" font-size="9.8" fill="#000000" stroke="#000000" stroke-width="0.2" font-weight="normal" text-anchor="start" textLength="28.5" lengthAdjust="spacing" >LF353</text>
<text x="578.6" y="215" font-size="9.8" fill="#000000" stroke="#000000" stroke-width="0.2" font-weight="normal" text-anchor="start" textLength="11.2" lengthAdjust="spacing" >U1</text>
<text x="578.7" y="247" font-size="9.8" fill="#000000" stroke="#000000" stroke-width="0.2" font-weight="normal" text-anchor="start" textLength="28.1" lengthAdjust="spacing" >LF353</text>
<text x="567.7" y="281" font-size="9.8" fill="#000000" stroke="#000000" stroke-width="0.2" font-weight="normal" text-anchor="start" textLength="11.6" lengthAdjust="spacing" >R8</text>
<text x="564.4" y="308.8" font-size="9.8" fill="#000000" stroke="#000000" stroke-width="0.2" font-weight="normal" text-anchor="start" textLength="18" lengthAdjust="spacing" >6k8</text>
<text x="644.8" y="347.2" font-size="9.8" fill="#000000" stroke="#000000" stroke-width="0.2" font-weight="normal" text-anchor="start" textLength="16.7" lengthAdjust="spacing" >R11</text>
<text x="644.8" y="365" font-size="9.8" fill="#000000" stroke="#000000" stroke-width="0.2" font-weight="normal" text-anchor="start" textLength="16.2" lengthAdjust="spacing" >10k</text>
<text x="638.3" y="411" font-size="9.8" fill="#000000" stroke="#000000" stroke-width="0.2" font-weight="normal" text-anchor="start" textLength="11.5" lengthAdjust="spacing" >C4</text>
<text x="638" y="435" font-size="9.8" fill="#000000" stroke="#000000" stroke-width="0.2" font-weight="normal" text-anchor="start" textLength="23.3" lengthAdjust="spacing" >470n</text>
<text x="447" y="315" font-size="9.8" fill="#000000" stroke="#000000" stroke-width="0.2" font-weight="normal" text-anchor="start" textLength="94.3" lengthAdjust="spacing" >;ac oct 100 1 10000</text>
<text x="447" y="331" font-size="9.8" fill="#000000" stroke="#000000" stroke-width="0.2" font-weight="normal" text-anchor="start" textLength="115.6" lengthAdjust="spacing" >.tran 0 250m 50m 1u uic</text>
<text x="447" y="351" font-size="9.8" fill="#000000" stroke="#000000" stroke-width="0.2" font-weight="normal" text-anchor="start" textLength="82.2" lengthAdjust="spacing" >.inc OpAmps.sub</text>
<text x="450.3" y="367" font-size="9.8" fill="#000000" stroke="#000000" stroke-width="0.2" font-weight="normal" text-anchor="start" textLength="82.2" lengthAdjust="spacing" >.inc standard.jfet</text>
<text x="454.7" y="387" font-size="9.8" fill="#000000" stroke="#000000" stroke-width="0.2" font-weight="normal" text-anchor="start" textLength="131" lengthAdjust="spacing" >.step param c list 47n 100n</text>
<text x="422.7" y="363" font-size="9.8" fill="#000000" stroke="#000000" stroke-width="0.2" font-weight="normal" text-anchor="start" textLength="11.8" lengthAdjust="spacing" >C3</text>
<text x="421.6" y="387" font-size="9.8" fill="#000000" stroke="#000000" stroke-width="0.2" font-weight="normal" text-anchor="start" textLength="23.7" lengthAdjust="spacing" >470n</text>
<text x="283.4" y="475" font-size="9.8" fill="#000000" stroke="#000000" stroke-width="0.2" font-weight="normal" text-anchor="start" textLength="48.8" lengthAdjust="spacing" >.param r 1</text>
<text x="283.4" y="488" font-size="9.8" fill="#000000" stroke="#000000" stroke-width="0.2" font-weight="normal" text-anchor="start" textLength="138.7" lengthAdjust="spacing" >;.step param r list 100k 220k</text>
<text x="88.8" y="337" font-size="9.8" fill="#000000" stroke="#000000" stroke-width="0.2" font-weight="normal" text-anchor="start" textLength="11.2" lengthAdjust="spacing" >R9</text>
<text x="89.5" y="365" font-size="9.8" fill="#000000" stroke="#000000" stroke-width="0.2" font-weight="normal" text-anchor="start" textLength="11.7" lengthAdjust="spacing" >{r}</text>
<text x="130.9" y="351" font-size="9.8" fill="#000000" stroke="#000000" stroke-width="0.2" font-weight="normal" text-anchor="start" textLength="20.3" lengthAdjust="spacing" >plus</text>
<text x="39.4" y="367" font-size="9.8" fill="#000000" stroke="#000000" stroke-width="0.2" font-weight="normal" text-anchor="start" textLength="11.6" lengthAdjust="spacing" >V4</text>
<text x="9.4" y="425" font-size="9.8" fill="#000000" stroke="#000000" stroke-width="0.2" font-weight="normal" text-anchor="start" textLength="183.9" lengthAdjust="spacing" >PULSE(-5 0 450u 100n 100n 100u 1m)</text>
<text x="115.8" y="391" font-size="9.8" fill="#0000ff" stroke="#0000ff" stroke-width="0.2" font-weight="normal" text-anchor="start" textLength="67.4" lengthAdjust="spacing" >Offset voltage</text>
<text x="188.4" y="385.3" font-size="9.8" fill="#000000" stroke="#000000" stroke-width="0.2" font-weight="normal" text-anchor="start" textLength="11.7" lengthAdjust="spacing" >R2</text>
<text x="183.9" y="402.8" font-size="9.8" fill="#000000" stroke="#000000" stroke-width="0.2" font-weight="normal" text-anchor="start" textLength="16.2" lengthAdjust="spacing" >10k</text>
<text x="223.7" y="431" font-size="9.8" fill="#000000" stroke="#000000" stroke-width="0.2" font-weight="normal" text-anchor="start" textLength="11.2" lengthAdjust="spacing" >V6</text>
<text x="223.7" y="485" font-size="9.8" fill="#000000" stroke="#000000" stroke-width="0.2" font-weight="normal" text-anchor="start" textLength="20.9" lengthAdjust="spacing" >AC 1</text>
<text x="223" y="499" font-size="9.8" fill="#000000" stroke="#000000" stroke-width="0.2" font-weight="normal" text-anchor="start" >0</text>
<text x="93.3" y="449" font-size="9.8" fill="#000000" stroke="#000000" stroke-width="0.2" font-weight="normal" text-anchor="start" textLength="18" lengthAdjust="spacing" >R10</text>
<text x="97.1" y="477" font-size="9.8" fill="#000000" stroke="#000000" stroke-width="0.2" font-weight="normal" text-anchor="start" textLength="11.9" lengthAdjust="spacing" >{r}</text>
<text x="139.8" y="463" font-size="9.8" fill="#000000" stroke="#000000" stroke-width="0.2" font-weight="normal" text-anchor="start" textLength="28.4" lengthAdjust="spacing" >minus</text>
<text x="39.3" y="479" font-size="9.8" fill="#000000" stroke="#000000" stroke-width="0.2" font-weight="normal" text-anchor="start" textLength="12" lengthAdjust="spacing" >V5</text>
<text x="44.5" y="518" font-size="9.8" fill="#000000" stroke="#000000" stroke-width="0.2" font-weight="normal" text-anchor="start" textLength="183.7" lengthAdjust="spacing" >PULSE(-5 0 950u 100n 100n 100u 1m)</text>
<text transform="translate(30,171.4) rotate(-90)" x="0" y="0" font-size="12.5" fill="#000000" font-weight="bold" textLength="23.7" lengthAdjust="spacingAndGlyphs">VCC</text>
<text transform="translate(30.4,323.9) rotate(-90)" x="0" y="0" font-size="12.5" fill="#000000" font-weight="bold" textLength="23.3" lengthAdjust="spacingAndGlyphs">VEE</text>
<text transform="translate(318,214.9) rotate(-90)" x="0" y="0" font-size="12.5" fill="#000000" font-weight="bold" textLength="12.5" lengthAdjust="spacingAndGlyphs">J1</text>
<text transform="translate(338,214.9) rotate(-90)" x="0" y="0" font-size="12.5" fill="#000000" font-weight="bold" textLength="43.3" lengthAdjust="spacingAndGlyphs">BF245B</text>
<text transform="translate(334.2,284.9) rotate(-90)" x="0" y="0" font-size="12.5" fill="#000000" font-weight="bold" textLength="32.8" lengthAdjust="spacingAndGlyphs">minus</text>
<text transform="translate(453.2,211.1) rotate(-90)" x="0" y="0" font-size="12.5" fill="#000000" font-weight="bold" textLength="23.1" lengthAdjust="spacingAndGlyphs">VCC</text>
<text transform="translate(453.2,267.4) rotate(-90)" x="0" y="0" font-size="12.5" fill="#000000" font-weight="bold" textLength="22.7" lengthAdjust="spacingAndGlyphs">VEE</text>
<text transform="translate(573.5,210.9) rotate(-90)" x="0" y="0" font-size="12.5" fill="#000000" font-weight="bold" textLength="23.2" lengthAdjust="spacingAndGlyphs">VCC</text>
<text transform="translate(573.4,267) rotate(-90)" x="0" y="0" font-size="12.5" fill="#000000" font-weight="bold" textLength="21.9" lengthAdjust="spacingAndGlyphs">VEE</text>
<text transform="translate(310,351.3) rotate(-90)" x="0" y="0" font-size="12.5" fill="#000000" font-weight="bold" textLength="13.5" lengthAdjust="spacingAndGlyphs">J2</text>
<text transform="translate(330.1,351.3) rotate(-90)" x="0" y="0" font-size="12.5" fill="#000000" font-weight="bold" textLength="43.9" lengthAdjust="spacingAndGlyphs">BF245B</text>
<text transform="translate(325.6,410.6) rotate(-90)" x="0" y="0" font-size="12.5" fill="#000000" font-weight="bold" textLength="22.7" lengthAdjust="spacingAndGlyphs">plus</text>
<text transform="translate(631,396.2) rotate(-90)" x="0" y="0" font-size="12.5" fill="#000000" font-weight="bold" textLength="16.8" lengthAdjust="spacingAndGlyphs">out</text>
<rect x="685" y="27" width="669" height="591" fill="#050308"/>
<g shape-rendering="crispEdges">
<path d="M737,91.5 H1332" stroke="#808080" stroke-width="1" stroke-dasharray="3 3"/>
<path d="M737,136.5 H1332" stroke="#808080" stroke-width="1" stroke-dasharray="3 3"/>
<path d="M737,182.5 H1332" stroke="#808080" stroke-width="1" stroke-dasharray="3 3"/>
<path d="M737,227.5 H1332" stroke="#808080" stroke-width="1" stroke-dasharray="3 3"/>
<path d="M737,273.5 H1332" stroke="#808080" stroke-width="1" stroke-dasharray="3 3"/>
<path d="M737,318.5 H1332" stroke="#808080" stroke-width="1" stroke-dasharray="3 3"/>
<path d="M737,364.5 H1332" stroke="#808080" stroke-width="1" stroke-dasharray="3 3"/>
<path d="M737,409.5 H1332" stroke="#808080" stroke-width="1" stroke-dasharray="3 3"/>
<path d="M737,455.5 H1332" stroke="#808080" stroke-width="1" stroke-dasharray="3 3"/>
<path d="M737,500.5 H1332" stroke="#808080" stroke-width="1" stroke-dasharray="3 3"/>
<path d="M737,546.5 H1332" stroke="#808080" stroke-width="1" stroke-dasharray="3 3"/>
<path d="M797.5,49 V591" stroke="#808080" stroke-width="1" stroke-dasharray="3 3"/>
<path d="M856.5,49 V591" stroke="#808080" stroke-width="1" stroke-dasharray="3 3"/>
<path d="M916.5,49 V591" stroke="#808080" stroke-width="1" stroke-dasharray="3 3"/>
<path d="M975.5,49 V591" stroke="#808080" stroke-width="1" stroke-dasharray="3 3"/>
<path d="M1035.5,49 V591" stroke="#808080" stroke-width="1" stroke-dasharray="3 3"/>
<path d="M1094.5,49 V591" stroke="#808080" stroke-width="1" stroke-dasharray="3 3"/>
<path d="M1154.5,49 V591" stroke="#808080" stroke-width="1" stroke-dasharray="3 3"/>
<path d="M1213.5,49 V591" stroke="#808080" stroke-width="1" stroke-dasharray="3 3"/>
<path d="M1273.5,49 V591" stroke="#808080" stroke-width="1" stroke-dasharray="3 3"/>
<rect x="737.5" y="45.5" width="595" height="546" fill="none" stroke="#c0c0c0" stroke-width="1"/>
<path d="M730,45.5 H737" stroke="#c0c0c0"/>
<path d="M730,91.5 H737" stroke="#c0c0c0"/>
<path d="M730,136.5 H737" stroke="#c0c0c0"/>
<path d="M730,182.5 H737" stroke="#c0c0c0"/>
<path d="M730,227.5 H737" stroke="#c0c0c0"/>
<path d="M730,273.5 H737" stroke="#c0c0c0"/>
<path d="M730,318.5 H737" stroke="#c0c0c0"/>
<path d="M730,364.5 H737" stroke="#c0c0c0"/>
<path d="M730,409.5 H737" stroke="#c0c0c0"/>
<path d="M730,455.5 H737" stroke="#c0c0c0"/>
<path d="M730,500.5 H737" stroke="#c0c0c0"/>
<path d="M730,546.5 H737" stroke="#c0c0c0"/>
<path d="M730,591.5 H737" stroke="#c0c0c0"/>
<path d="M737.5,591 V598" stroke="#c0c0c0"/>
<path d="M797.5,591 V598" stroke="#c0c0c0"/>
<path d="M856.5,591 V598" stroke="#c0c0c0"/>
<path d="M916.5,591 V598" stroke="#c0c0c0"/>
<path d="M975.5,591 V598" stroke="#c0c0c0"/>
<path d="M1035.5,591 V598" stroke="#c0c0c0"/>
<path d="M1094.5,591 V598" stroke="#c0c0c0"/>
<path d="M1154.5,591 V598" stroke="#c0c0c0"/>
<path d="M1213.5,591 V598" stroke="#c0c0c0"/>
<path d="M1273.5,591 V598" stroke="#c0c0c0"/>
<path d="M1332.5,591 V598" stroke="#c0c0c0"/>
</g>
<text x="729.2" y="49.8" font-size="13.5" fill="#c0c0c0" stroke="#c0c0c0" stroke-width="0.45" text-anchor="end" textLength="39.2" lengthAdjust="spacing">5.5mV</text>
<text x="729.2" y="95.8" font-size="13.5" fill="#c0c0c0" stroke="#c0c0c0" stroke-width="0.45" text-anchor="end" textLength="39.2" lengthAdjust="spacing">5.0mV</text>
<text x="729.2" y="140.8" font-size="13.5" fill="#c0c0c0" stroke="#c0c0c0" stroke-width="0.45" text-anchor="end" textLength="39.2" lengthAdjust="spacing">4.5mV</text>
<text x="729.2" y="186.8" font-size="13.5" fill="#c0c0c0" stroke="#c0c0c0" stroke-width="0.45" text-anchor="end" textLength="39.2" lengthAdjust="spacing">4.0mV</text>
<text x="729.2" y="231.8" font-size="13.5" fill="#c0c0c0" stroke="#c0c0c0" stroke-width="0.45" text-anchor="end" textLength="39.2" lengthAdjust="spacing">3.5mV</text>
<text x="729.2" y="277.8" font-size="13.5" fill="#c0c0c0" stroke="#c0c0c0" stroke-width="0.45" text-anchor="end" textLength="39.2" lengthAdjust="spacing">3.0mV</text>
<text x="729.2" y="322.8" font-size="13.5" fill="#c0c0c0" stroke="#c0c0c0" stroke-width="0.45" text-anchor="end" textLength="39.2" lengthAdjust="spacing">2.5mV</text>
<text x="729.2" y="368.8" font-size="13.5" fill="#c0c0c0" stroke="#c0c0c0" stroke-width="0.45" text-anchor="end" textLength="39.2" lengthAdjust="spacing">2.0mV</text>
<text x="729.2" y="413.8" font-size="13.5" fill="#c0c0c0" stroke="#c0c0c0" stroke-width="0.45" text-anchor="end" textLength="39.2" lengthAdjust="spacing">1.5mV</text>
<text x="729.2" y="459.8" font-size="13.5" fill="#c0c0c0" stroke="#c0c0c0" stroke-width="0.45" text-anchor="end" textLength="39.2" lengthAdjust="spacing">1.0mV</text>
<text x="729.2" y="504.8" font-size="13.5" fill="#c0c0c0" stroke="#c0c0c0" stroke-width="0.45" text-anchor="end" textLength="39.2" lengthAdjust="spacing">0.5mV</text>
<text x="729.2" y="550.8" font-size="13.5" fill="#c0c0c0" stroke="#c0c0c0" stroke-width="0.45" text-anchor="end" textLength="39.2" lengthAdjust="spacing">0.0mV</text>
<text x="729.2" y="595.8" font-size="13.5" fill="#c0c0c0" stroke="#c0c0c0" stroke-width="0.45" text-anchor="end" textLength="44.3" lengthAdjust="spacing">-0.5mV</text>
<text x="724.1" y="611.5" font-size="13.5" fill="#c0c0c0" stroke="#c0c0c0" stroke-width="0.45" textLength="26.8" lengthAdjust="spacing">0ms</text>
<text x="780" y="611.5" font-size="13.5" fill="#c0c0c0" stroke="#c0c0c0" stroke-width="0.45" textLength="35" lengthAdjust="spacing">20ms</text>
<text x="839" y="611.5" font-size="13.5" fill="#c0c0c0" stroke="#c0c0c0" stroke-width="0.45" textLength="35" lengthAdjust="spacing">40ms</text>
<text x="899" y="611.5" font-size="13.5" fill="#c0c0c0" stroke="#c0c0c0" stroke-width="0.45" textLength="35" lengthAdjust="spacing">60ms</text>
<text x="958" y="611.5" font-size="13.5" fill="#c0c0c0" stroke="#c0c0c0" stroke-width="0.45" textLength="35" lengthAdjust="spacing">80ms</text>
<text x="1014.45" y="611.5" font-size="13.5" fill="#c0c0c0" stroke="#c0c0c0" stroke-width="0.45" textLength="42.1" lengthAdjust="spacing">100ms</text>
<text x="1073.45" y="611.5" font-size="13.5" fill="#c0c0c0" stroke="#c0c0c0" stroke-width="0.45" textLength="42.1" lengthAdjust="spacing">120ms</text>
<text x="1133.45" y="611.5" font-size="13.5" fill="#c0c0c0" stroke="#c0c0c0" stroke-width="0.45" textLength="42.1" lengthAdjust="spacing">140ms</text>
<text x="1192.45" y="611.5" font-size="13.5" fill="#c0c0c0" stroke="#c0c0c0" stroke-width="0.45" textLength="42.1" lengthAdjust="spacing">160ms</text>
<text x="1252.45" y="611.5" font-size="13.5" fill="#c0c0c0" stroke="#c0c0c0" stroke-width="0.45" textLength="42.1" lengthAdjust="spacing">180ms</text>
<text x="1311.45" y="611.5" font-size="13.5" fill="#c0c0c0" stroke="#c0c0c0" stroke-width="0.45" textLength="42.1" lengthAdjust="spacing">200ms</text>
<text x="1016.1" y="39.8" font-size="13.5" fill="#00b4b4" textLength="35.1" lengthAdjust="spacing">V(out)</text>
<g shape-rendering="crispEdges">
<path fill="#00a8a8" d="M971 103h65v1h-65zM838 104h134v1h-134zM1036 104h1v1h-1zM833 105h5v1h-5zM1037 105h1v1h-1zM829 106h4v1h-4zM1038 106h1v1h-1zM825 107h4v1h-4zM1039 107h1v1h-1zM823 108h2v1h-2zM1040 108h1v2h-1zM822 109h1v1h-1zM820 110h2v1h-2zM1041 110h1v3h-1zM819 111h1v1h-1zM818 112h1v1h-1zM816 113h2v1h-2zM1042 113h1v4h-1zM815 114h1v1h-1zM814 115h1v1h-1zM813 116h1v1h-1zM812 117h1v1h-1zM1043 117h1v3h-1zM811 118h1v1h-1zM810 119h1v1h-1zM809 120h1v2h-1zM1044 120h1v4h-1zM808 122h1v1h-1zM807 123h1v2h-1zM1045 124h1v6h-1zM806 125h1v1h-1zM805 126h1v2h-1zM804 128h1v2h-1zM803 130h1v2h-1zM1046 130h1v4h-1zM802 132h1v3h-1zM1047 134h1v6h-1zM801 135h1v2h-1zM800 137h1v2h-1zM799 139h1v3h-1zM1048 140h1v8h-1zM798 142h1v3h-1zM797 145h1v3h-1zM796 148h1v4h-1zM1049 148h1v7h-1zM795 152h1v4h-1zM1050 155h1v6h-1zM794 156h1v3h-1zM793 159h1v4h-1zM1051 161h1v12h-1zM792 163h1v3h-1zM791 166h1v5h-1zM790 171h1v8h-1zM1052 173h1v14h-1zM789 179h1v6h-1zM788 185h1v5h-1zM1053 187h1v8h-1zM787 190h1v4h-1zM786 194h1v5h-1zM1054 195h1v8h-1zM785 199h1v6h-1zM1055 203h1v8h-1zM784 205h1v5h-1zM783 210h1v6h-1zM1056 211h1v7h-1zM782 216h1v6h-1zM1057 218h1v6h-1zM781 222h1v6h-1zM1058 224h1v13h-1zM780 228h1v7h-1zM779 235h1v8h-1zM1059 237h1v13h-1zM778 243h1v8h-1zM1060 250h1v8h-1zM777 251h1v8h-1zM1061 258h1v10h-1zM776 259h1v9h-1zM775 268h1v10h-1zM1062 268h1v12h-1zM774 278h1v8h-1zM1063 280h1v10h-1zM773 286h1v7h-1zM1064 290h1v8h-1zM772 293h1v6h-1zM1065 298h1v8h-1zM771 299h1v8h-1zM1066 306h1v8h-1zM770 307h1v9h-1zM1067 314h1v13h-1zM769 316h1v13h-1zM1068 327h1v13h-1zM768 329h1v12h-1zM1069 340h1v8h-1zM767 341h1v8h-1zM1070 348h1v7h-1zM766 349h1v10h-1zM1071 355h1v6h-1zM765 359h1v9h-1zM1072 361h1v11h-1zM764 368h1v8h-1zM1073 372h1v11h-1zM763 376h1v10h-1zM1074 383h1v6h-1zM762 386h1v11h-1zM1075 389h1v8h-1zM761 397h1v9h-1zM1076 397h1v8h-1zM1077 405h1v9h-1zM760 406h1v9h-1zM1078 414h1v8h-1zM759 415h1v8h-1zM1079 422h1v7h-1zM758 423h1v12h-1zM1080 429h1v5h-1zM1081 434h1v6h-1zM757 435h1v14h-1zM1082 440h1v5h-1zM1083 445h1v4h-1zM756 449h1v10h-1zM1084 449h1v4h-1zM1085 453h1v6h-1zM755 459h1v7h-1zM1086 459h1v7h-1zM754 466h1v10h-1zM1087 466h1v5h-1zM1088 471h1v2h-1zM1089 473h1v3h-1zM753 476h1v10h-1zM1090 476h1v3h-1zM1091 479h1v4h-1zM1092 483h1v3h-1zM752 486h1v6h-1zM1093 486h1v4h-1zM1094 490h1v5h-1zM751 492h1v6h-1zM1095 495h1v4h-1zM750 498h1v8h-1zM1096 499h1v2h-1zM1097 501h1v3h-1zM1098 504h1v4h-1zM749 506h1v6h-1zM1099 508h1v2h-1zM1100 510h1v2h-1zM748 512h1v3h-1zM1101 512h1v2h-1zM1102 514h1v2h-1zM747 515h1v4h-1zM1103 516h1v2h-1zM1104 518h1v1h-1zM746 519h1v7h-1zM1105 519h1v1h-1zM1106 520h1v2h-1zM1107 522h1v1h-1zM1108 523h1v1h-1zM1109 524h1v1h-1zM1110 525h1v2h-1zM745 526h1v5h-1zM1111 527h1v1h-1zM1112 528h1v1h-1zM1113 529h1v1h-1zM1114 530h1v1h-1zM744 531h1v2h-1zM1115 531h2v1h-2zM1117 532h1v1h-1zM743 533h1v2h-1zM1118 533h2v1h-2zM1120 534h3v1h-3zM742 535h1v1h-1zM1123 535h3v1h-3zM741 536h1v1h-1zM1126 536h4v1h-4zM739 537h2v1h-2zM1130 537h8v1h-8zM738 538h1v1h-1zM1138 538h161v1h-161zM737 539h1v1h-1zM1298 539h35v1h-35z"/>
</g>
<g shape-rendering="crispEdges">
<path fill="#ff00ff" d="M825 80h10v1h-10zM823 81h2v1h-2zM835 81h2v1h-2zM821 82h2v1h-2zM837 82h2v1h-2zM820 83h1v1h-1zM839 83h2v1h-2zM819 84h1v2h-1zM841 84h2v1h-2zM843 85h2v1h-2zM818 86h1v2h-1zM845 86h2v1h-2zM847 87h1v1h-1zM817 88h1v1h-1zM848 88h2v1h-2zM816 89h1v1h-1zM850 89h1v1h-1zM815 90h1v1h-1zM851 90h1v1h-1zM814 91h1v2h-1zM852 91h2v1h-2zM854 92h1v1h-1zM813 93h1v2h-1zM855 93h1v1h-1zM856 94h2v1h-2zM812 95h1v2h-1zM858 95h1v1h-1zM859 96h2v1h-2zM811 97h1v3h-1zM861 97h2v1h-2zM863 98h2v1h-2zM865 99h2v1h-2zM810 100h1v3h-1zM867 100h2v1h-2zM869 101h3v1h-3zM872 102h3v1h-3zM809 103h1v3h-1zM875 103h3v1h-3zM959 103h79v1h-79zM878 104h7v1h-7zM935 104h25v1h-25zM1038 104h2v1h-2zM884 105h7v1h-7zM919 105h17v1h-17zM1040 105h1v2h-1zM808 106h1v3h-1zM890 106h30v1h-30zM1041 107h1v2h-1zM807 109h1v2h-1zM1042 109h1v2h-1zM806 111h1v2h-1zM1043 111h1v2h-1zM805 113h1v4h-1zM1044 113h1v2h-1zM1045 115h1v3h-1zM804 117h1v4h-1zM1046 118h1v3h-1zM803 121h1v4h-1zM1047 121h1v2h-1zM1048 123h1v5h-1zM802 125h1v4h-1zM1049 128h1v6h-1zM801 129h1v5h-1zM800 134h1v4h-1zM1050 134h1v4h-1zM799 138h1v7h-1zM1051 138h1v6h-1zM1052 144h1v8h-1zM798 145h1v6h-1zM797 151h1v4h-1zM1053 152h1v8h-1zM796 155h1v4h-1zM795 159h1v5h-1zM1054 160h1v8h-1zM794 164h1v6h-1zM1055 168h1v7h-1zM793 170h1v5h-1zM792 175h1v5h-1zM1056 175h1v5h-1zM791 180h1v7h-1zM1057 180h1v7h-1zM790 187h1v8h-1zM1058 187h1v8h-1zM789 195h1v8h-1zM1059 195h1v8h-1zM788 203h1v6h-1zM1060 203h1v8h-1zM787 209h1v8h-1zM1061 211h1v11h-1zM786 217h1v8h-1zM1062 222h1v11h-1zM785 225h1v9h-1zM1063 233h1v9h-1zM784 234h1v8h-1zM783 242h1v9h-1zM1064 242h1v8h-1zM1065 250h1v8h-1zM782 251h1v8h-1zM1066 258h1v10h-1zM781 259h1v9h-1zM780 268h1v10h-1zM1067 268h1v9h-1zM1068 277h1v6h-1zM779 278h1v8h-1zM1069 283h1v11h-1zM778 286h1v10h-1zM1070 294h1v13h-1zM777 296h1v11h-1zM776 307h1v9h-1zM1071 307h1v8h-1zM1072 315h1v9h-1zM775 316h1v9h-1zM1073 324h1v8h-1zM774 325h1v8h-1zM1074 332h1v10h-1zM773 333h1v8h-1zM772 341h1v8h-1zM1075 342h1v10h-1zM771 349h1v10h-1zM1076 352h1v8h-1zM770 359h1v13h-1zM1077 360h1v8h-1zM1078 368h1v8h-1zM769 372h1v11h-1zM1079 376h1v10h-1zM768 383h1v6h-1zM1080 386h1v11h-1zM767 389h1v8h-1zM766 397h1v9h-1zM1081 397h1v8h-1zM1082 405h1v9h-1zM765 406h1v9h-1zM1083 414h1v8h-1zM764 415h1v8h-1zM1084 422h1v8h-1zM763 423h1v12h-1zM1085 430h1v8h-1zM762 435h1v11h-1zM1086 438h1v8h-1zM761 446h1v6h-1zM1087 446h1v6h-1zM760 452h1v7h-1zM1088 452h1v7h-1zM759 459h1v7h-1zM1089 459h1v7h-1zM758 466h1v7h-1zM1090 466h1v5h-1zM1091 471h1v4h-1zM757 473h1v6h-1zM1092 475h1v5h-1zM756 479h1v8h-1zM1093 480h1v5h-1zM1094 485h1v6h-1zM755 487h1v9h-1zM1095 491h1v7h-1zM754 496h1v7h-1zM1096 498h1v6h-1zM753 503h1v5h-1zM1097 504h1v4h-1zM752 508h1v4h-1zM1098 508h1v4h-1zM751 512h1v4h-1zM1099 512h1v4h-1zM750 516h1v3h-1zM1100 516h1v4h-1zM749 519h1v4h-1zM1101 520h1v3h-1zM748 523h1v4h-1zM1102 523h1v3h-1zM1103 526h1v3h-1zM747 527h1v3h-1zM1104 529h1v4h-1zM746 530h1v3h-1zM745 533h1v3h-1zM1105 533h1v3h-1zM744 536h1v2h-1zM1106 536h1v2h-1zM1184 536h34v1h-34zM1179 537h5v1h-5zM1217 537h21v1h-21zM742 538h2v1h-2zM1107 538h1v3h-1zM1176 538h3v1h-3zM1237 538h62v1h-62zM737 539h5v1h-5zM1174 539h2v1h-2zM1298 539h35v1h-35zM1171 540h3v1h-3zM1108 541h1v3h-1zM1167 541h4v1h-4zM1164 542h3v1h-3zM1162 543h2v1h-2zM1109 544h1v2h-1zM1160 544h2v1h-2zM1158 545h2v1h-2zM1110 546h1v2h-1zM1157 546h1v1h-1zM1156 547h1v1h-1zM1111 548h1v2h-1zM1155 548h1v1h-1zM1153 549h2v1h-2zM1112 550h1v2h-1zM1151 550h2v1h-2zM1150 551h1v1h-1zM1113 552h1v2h-1zM1148 552h2v1h-2zM1147 553h1v1h-1zM1114 554h1v1h-1zM1145 554h2v1h-2zM1115 555h1v1h-1zM1144 555h1v1h-1zM1116 556h1v1h-1zM1142 556h2v1h-2zM1117 557h2v1h-2zM1140 557h2v1h-2zM1119 558h1v1h-1zM1139 558h1v1h-1zM1120 559h1v1h-1zM1137 559h2v1h-2zM1121 560h2v1h-2zM1135 560h2v1h-2zM1123 561h2v1h-2zM1132 561h3v1h-3zM1125 562h7v1h-7z"/>
</g>
</svg></body></html>
